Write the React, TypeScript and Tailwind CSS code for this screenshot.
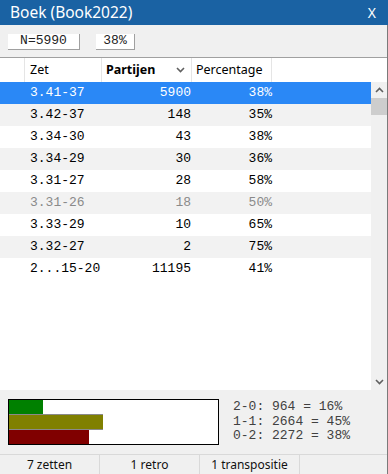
const rows = [
  { zet: '3.41-37', n: '5900', pct: '38%', selected: true },
  { zet: '3.42-37', n: '148', pct: '35%' },
  { zet: '3.34-30', n: '43', pct: '38%' },
  { zet: '3.34-29', n: '30', pct: '36%' },
  { zet: '3.31-27', n: '28', pct: '58%' },
  { zet: '3.31-26', n: '18', pct: '50%', dim: true },
  { zet: '3.33-29', n: '10', pct: '65%' },
  { zet: '3.32-27', n: '2', pct: '75%' },
  { zet: '2...15-20', n: '11195', pct: '41%' },
];

const mono = "font-['Liberation_Mono','Courier_New',monospace]";
const ui = "font-['Noto_Sans','Segoe_UI',sans-serif]";

function Chevron({ up }: { up?: boolean }) {
  return (
    <svg width="9" height="6" viewBox="0 0 9 6" className="text-[#606060]">
      <path d={up ? 'M1 5 L4.5 1.5 L8 5' : 'M1 1 L4.5 4.5 L8 1'} fill="none" stroke="currentColor" strokeWidth="1.6" />
    </svg>
  );
}

export default function App() {
  return (
    <div className={`w-[388px] h-[474px] flex flex-col bg-[#f0f0f0] overflow-hidden ${ui}`}>
      <div className="h-[25px] bg-[#1a62a3] flex items-center justify-between pl-[10px] pr-[12px] text-white">
        <span className="text-[15.5px] leading-none">Boek (Book2022)</span>
        <span className="text-[14px] leading-none">X</span>
      </div>

      <div className="flex-1 flex flex-col border-r border-[#7a7a7a]">
        <div className="h-[32px] flex items-center gap-[16px] pl-[8px] pt-[1px]">
          <div className={`w-[72px] h-[16px] bg-white border-r border-b border-[#a0a0a0] flex items-center justify-center text-[13px] text-[#222] ${mono}`}>
            N=5990
          </div>
          <div className={`w-[39px] h-[16px] bg-white border-r border-b border-[#a0a0a0] flex items-center justify-center text-[13px] text-[#222] ${mono}`}>
            38%
          </div>
        </div>

        <div className="h-[333px] flex flex-col bg-white border-t border-[#a0a0a0]">
          <div className="h-[24px] flex text-[12.5px] text-black">
            <div className="w-[25px] border-r border-[#e5e5e5]" />
            <div className="w-[77px] border-r border-[#e5e5e5] flex items-center pl-[5px]">Zet</div>
            <div className="w-[90px] border-r border-[#e5e5e5] flex items-center justify-between pl-[4px] pr-[6px] font-bold">
              <span>Partijen</span>
              <Chevron />
            </div>
            <div className="w-[80px] border-r border-[#e5e5e5] flex items-center pl-[4px]">Percentage</div>
          </div>

          <div className="flex-1 flex">
            <div className="flex-1 flex flex-col">
              {rows.map((r, i) => (
                <div
                  key={r.zet}
                  className={`h-[22px] flex items-center text-[13px] ${mono} ${
                    r.selected ? 'bg-[#2a88f6] text-white' : i % 2 === 1 ? 'bg-[#f2f2f2]' : 'bg-white'
                  } ${r.dim ? 'text-[#8a8a8a]' : r.selected ? '' : 'text-black'}`}
                >
                  <div className="w-[25px]" />
                  <div className="w-[77px] pl-[5px]">{r.zet}</div>
                  <div className="w-[90px] text-right pr-[1px]">{r.n}</div>
                  <div className="w-[80px] text-right">{r.pct}</div>
                </div>
              ))}
            </div>
            <div className="w-[16px] bg-[#f0f0f0] flex flex-col items-center">
              <div className="h-[16px] flex items-center justify-center">
                <Chevron up />
              </div>
              <div className="w-[16px] h-[17px] bg-[#cdcdcd]" />
              <div className="flex-1" />
              <div className="h-[16px] flex items-center justify-center">
                <Chevron />
              </div>
            </div>
          </div>
        </div>

        <div className="h-[64px] flex items-center pl-[8px]">
          <div className="w-[211px] h-[46px] border border-black bg-white flex flex-col">
            <div className="h-[14px] w-[34px] bg-[#008000]" />
            <div className="h-[16px] w-[94px] bg-[#808000] border-y border-[#8a8a8a]" />
            <div className="h-[14px] w-[80px] bg-[#800000]" />
          </div>
          <div className={`ml-[14px] text-[13px] leading-[14.5px] text-[#404040] whitespace-pre ${mono}`}>
            <div>2-0: 964 = 16%</div>
            <div>1-1: 2664 = 45%</div>
            <div>0-2: 2272 = 38%</div>
          </div>
        </div>

        <div className="flex-1 flex border-t border-[#d9d9d9] text-[12px] text-[#111]">
          <div className="w-[100px] border-r border-[#d9d9d9] flex items-center justify-center">7 zetten</div>
          <div className="w-[100px] border-r border-[#d9d9d9] flex items-center justify-center">1 retro</div>
          <div className="w-[100px] border-r border-[#d9d9d9] flex items-center justify-center">1 transpositie</div>
          <div className="flex-1" />
        </div>
      </div>
    </div>
  );
}
